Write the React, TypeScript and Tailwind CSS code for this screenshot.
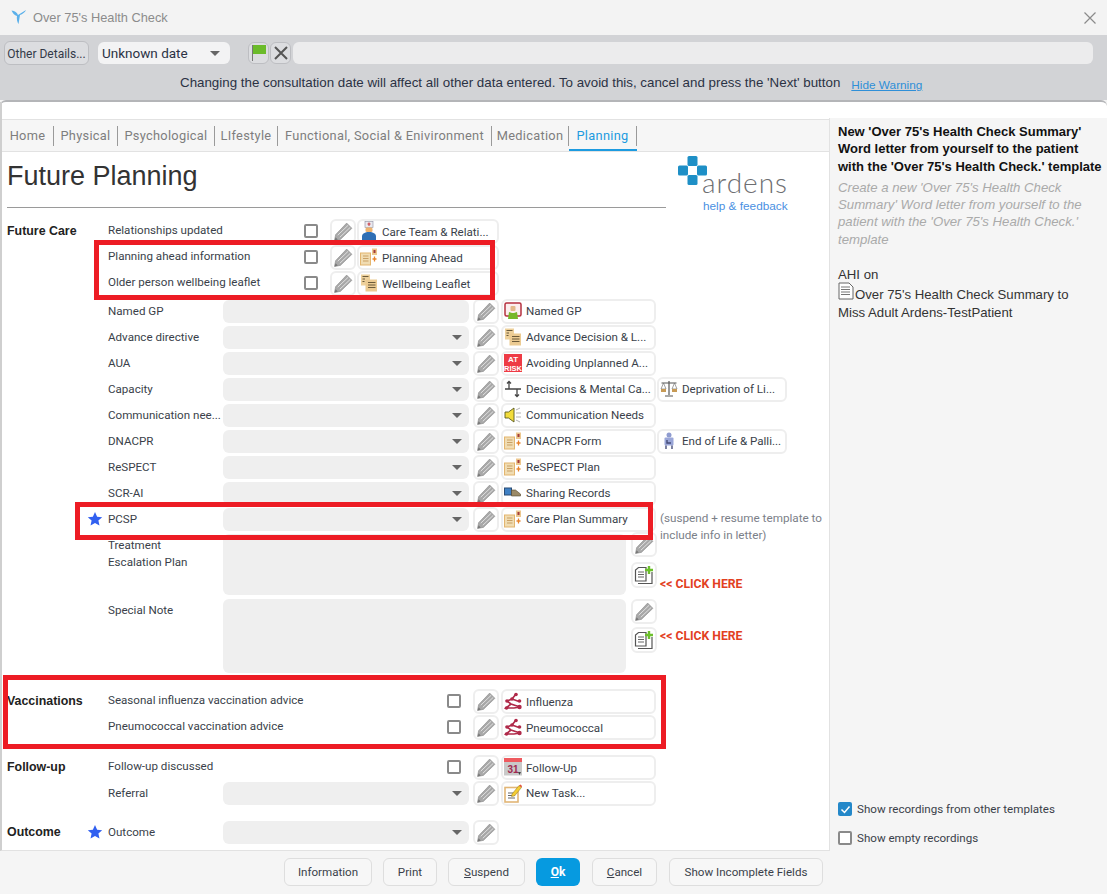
import type { ReactNode } from "react";

const Pencil = () => (
  <svg width="21" height="21" viewBox="0 0 20 20" aria-hidden="true">
    <path d="M1.500 18.500l1-5.500L13 2l5 5L7 17.500z" fill="#a8a8a8" stroke="#959595" strokeWidth="0.700" />
    <path d="M4.500 13.500L14.500 4M6.500 15.500L16.500 6" stroke="#e4e4e4" strokeWidth="0.900" />
    <path d="M1.500 18.500l1-3 2 2z" fill="#777" />
  </svg>
);

const Leaflet = () => (
  <svg width="18" height="18" viewBox="0 0 18 18" aria-hidden="true">
    <rect x="1" y="0.500" width="9" height="11" fill="#eed19c" />
    <rect x="5.500" y="5.500" width="11.500" height="12" fill="#eccb92" />
    <path d="M2.500 2.500h6M2.500 5h2.500M2.500 7.500h2M8 8.500h7.500M8 11h7.500M8 13.500h7.500" stroke="#6b5a3a" strokeWidth="1" />
  </svg>
);

const PlanDoc = () => (
  <svg width="18" height="18" viewBox="0 0 18 18" aria-hidden="true">
    <rect x="0.500" y="5" width="10" height="12" fill="#f0dcb2" stroke="#e3b56e" />
    <path d="M3 8h5.500M3 10.500h5.500M3 13h5.500" stroke="#c9a064" strokeWidth="1" />
    <rect x="12" y="0.500" width="5" height="6.500" fill="#edc88f" />
    <rect x="13.500" y="2" width="2" height="3" fill="#a33b3b" />
    <path d="M14.500 8.500v5M12.500 11h4" stroke="#e8832b" strokeWidth="1.300" />
  </svg>
);

const CareTeam = () => (
  <svg width="18" height="20" viewBox="0 0 18 20" aria-hidden="true">
    <rect x="5" y="0.500" width="8" height="6" fill="#e9e9ee" stroke="#8d8da0" strokeWidth="0.600" />
    <path d="M9 1.500v3.500M7.500 3h3" stroke="#c8323c" strokeWidth="1" />
    <rect x="5.500" y="6.500" width="7" height="4.500" rx="1.500" fill="#eeb36e" />
    <path d="M2 19v-3.500c0-3 3-4.500 7-4.500s7 1.500 7 4.500V19z" fill="#2f6fb5" />
  </svg>
);

const NamedGp = () => (
  <svg width="18" height="18" viewBox="0 0 18 18" aria-hidden="true">
    <rect x="1" y="1" width="16" height="13" rx="1.500" fill="#fbeeee" stroke="#b5303f" strokeWidth="1.500" />
    <rect x="6.500" y="4" width="5" height="5" rx="1" fill="#e3b98a" />
    <path d="M4 17l1-7 3 1h2l3-1 1 7z" fill="#76b82a" />
  </svg>
);

const AtRisk = () => (
  <svg width="18" height="18" viewBox="0 0 18 18" aria-hidden="true">
    <rect width="18" height="18" fill="#ee3b45" />
    <text x="9" y="8" textAnchor="middle" fontSize="8" fontWeight="700" fontFamily="Liberation Sans" fill="#fff">AT</text>
    <text x="9" y="16.500" textAnchor="middle" fontSize="7.500" fontWeight="700" fontFamily="Liberation Sans" fill="#fff">RISK</text>
  </svg>
);

const Decisions = () => (
  <svg width="18" height="18" viewBox="0 0 18 18" fill="none" stroke="#444" strokeWidth="1.300" aria-hidden="true">
    <path d="M5 1.500v8M3 3.500l2-2 2 2M1 9h16M13 9v7.500M11 14.500l2 2 2-2" />
  </svg>
);

const Speaker = () => (
  <svg width="18" height="18" viewBox="0 0 18 18" aria-hidden="true">
    <path d="M1 6h3.500L10 2v14l-5.500-4H1z" fill="#f2dc3b" stroke="#5a5a20" strokeWidth="0.900" />
    <path d="M12 4l4-2M12 7h5M12 11h5M12 14l4 2" stroke="#aaa" strokeWidth="0.900" />
  </svg>
);

const Sharing = () => (
  <svg width="18" height="18" viewBox="0 0 18 18" aria-hidden="true">
    <rect x="0.500" y="4" width="7" height="7" fill="#3f80c4" stroke="#2b4c74" />
    <path d="M7.500 6h4l5 4v2h-9z" fill="#9b8a67" stroke="#55492f" strokeWidth="0.600" />
  </svg>
);

const Scales = () => (
  <svg width="18" height="18" viewBox="0 0 18 18" aria-hidden="true">
    <path d="M9 1v14M1.500 3h15M5 16h8" stroke="#555" strokeWidth="1.200" fill="none" />
    <path d="M3.500 3L1 9h5zM14.500 3L12 9h5z" fill="none" stroke="#777" strokeWidth="0.700" />
    <rect x="1" y="9" width="5" height="3" fill="#c79a55" />
    <rect x="12" y="9" width="5" height="3" fill="#c79a55" />
  </svg>
);

const Palliative = () => (
  <svg width="18" height="18" viewBox="0 0 18 18" aria-hidden="true">
    <circle cx="9" cy="3" r="2.500" fill="#8f9cd0" />
    <rect x="4.500" y="5.500" width="9" height="8" rx="1" fill="#9aa6d8" />
    <path d="M7 8v3h4M6 13.500V17M12 13.500V17" stroke="#454c78" strokeWidth="1.400" fill="none" />
  </svg>
);

const Network = () => (
  <svg width="18" height="18" viewBox="0 0 18 18" aria-hidden="true">
    <path d="M12 2L8 7 3 9l4 3 9 3M8 7l7 2.500M7 12l-5 4h8l6-1" stroke="#b02a4a" strokeWidth="1.700" fill="none" />
    <circle cx="12" cy="2.500" r="1.800" fill="#b02a4a" />
    <circle cx="8" cy="7" r="1.800" fill="#b02a4a" />
    <circle cx="15.500" cy="9" r="1.800" fill="#b02a4a" />
    <circle cx="3" cy="9" r="1.800" fill="#b02a4a" />
    <circle cx="15.500" cy="15" r="2.200" fill="#b02a4a" />
    <circle cx="2.500" cy="16" r="1.800" fill="#b02a4a" />
  </svg>
);

const Calendar = () => (
  <svg width="18" height="18" viewBox="0 0 18 18" aria-hidden="true">
    <rect width="18" height="4" fill="#ee5a5f" />
    <rect y="4" width="18" height="13.500" fill="#c9c9c9" />
    <text x="3.500" y="14.500" fontSize="10" fontFamily="Liberation Sans" fontWeight="700" fill="#a02a50">31</text>
    <path d="M14 14h3l-1.500 3z" fill="#444" />
  </svg>
);

const NewTask = () => (
  <svg width="18" height="19" viewBox="0 0 18 19" aria-hidden="true">
    <rect x="1" y="3.500" width="13" height="14.500" fill="#fff" stroke="#e2b676" strokeWidth="1.600" />
    <path d="M4 9h7M4 11.500h7M4 14h7" stroke="#555" strokeWidth="0.900" />
    <path d="M8 10l7-8.500 2.500 2L10.500 12 7.500 12.500z" fill="#f4cc32" stroke="#8a7420" strokeWidth="0.500" />
    <path d="M15 1.500l2.500 2 .5-1.500-1.500-1.500z" fill="#e2533a" />
  </svg>
);

const AddDoc = () => (
  <svg width="20" height="20" viewBox="0 0 20 20" aria-hidden="true">
    <path d="M4 18.500h14V7" fill="none" stroke="#555" strokeWidth="1.200" />
    <path d="M1.500 16V5l3-2.500H12V16z" fill="#fff" stroke="#555" strokeWidth="1.200" />
    <path d="M4 7h6M4 9.500h6M4 12h6" stroke="#555" strokeWidth="0.900" />
    <path d="M15 1v8M11 5h8" stroke="#6cc02c" strokeWidth="2.400" />
  </svg>
);

const Star = () => (
  <svg width="16" height="16" viewBox="0 0 24 24" aria-hidden="true">
    <path d="M12 1.500l3.200 7 7.600.8-5.700 5.100 1.600 7.500L12 18l-6.700 3.900 1.600-7.500L1.200 9.300l7.600-.8z" fill="#3160f0" />
  </svg>
);

const Arrow = () => <span className="h-0 w-0 border-x-[5px] border-t-[5px] border-x-transparent border-t-[#666]" />;

const Box = () => <span className="block h-[14px] w-[14px] shrink-0 rounded-[2px] border-2 border-[#8a8a8a] bg-white" />;

const EditButton = () => (
  <button className="flex h-[25px] w-[26px] shrink-0 items-center justify-center rounded-md border-2 border-[#eeeeee] bg-white">
    <Pencil />
  </button>
);

function LinkButton({ icon, label, className, textTop = "pt-[1px]" }: { icon: ReactNode; label: string; className: string; textTop?: string }) {
  return (
    <button className={`flex h-[25px] shrink-0 items-center gap-[4px] overflow-hidden rounded-md border-2 border-[#eeeeee] bg-white pl-[1px] text-left text-[11.6px] whitespace-nowrap text-[#3a3f4a] ${className}`}>
      <span className="flex w-[18px] shrink-0 justify-center">{icon}</span>
      <span className={textTop}>{label}</span>
    </button>
  );
}

function Lead({ section, star }: { section?: string; star?: boolean }) {
  return (
    <>
      <div className="w-[79px] shrink-0 pl-[5px] font-['Liberation_Sans',sans-serif] text-[12.4px] font-bold text-[#222]">{section}</div>
      <div className="flex w-[27px] shrink-0 justify-center">{star && <Star />}</div>
    </>
  );
}

function CheckRow({ section, label, icon, link }: { section?: string; label: string; icon: ReactNode; link: string }) {
  return (
    <div className="flex h-[26px] items-center">
      <Lead section={section} />
      <div className="w-[196px] shrink-0 pb-[1px] text-[11.6px] text-[#3a3f4a]">{label}</div>
      <Box />
      <div className="ml-3 flex gap-px">
        <EditButton />
        <LinkButton icon={icon} label={link} className="w-[142px]" textTop="pt-[3px]" />
      </div>
    </div>
  );
}

function WideCheckRow({ section, label, icon, link }: { section?: string; label: string; icon: ReactNode; link: string }) {
  return (
    <div className="flex h-[26px] items-center">
      <Lead section={section} />
      <div className="w-[339px] shrink-0 pb-[1px] text-[11.6px] text-[#3a3f4a]">{label}</div>
      <Box />
      <div className="ml-3 flex gap-[2px]">
        <EditButton />
        <LinkButton icon={icon} label={link} className="w-[155px]" textTop="pt-[3px]" />
      </div>
    </div>
  );
}

type SelectRowProps = {
  section?: string;
  star?: boolean;
  label: string;
  noArrow?: boolean;
  icon?: ReactNode;
  link?: string;
  icon2?: ReactNode;
  link2?: string;
  children?: ReactNode;
};

function SelectRow({ section, star, label, noArrow, icon, link, icon2, link2, children }: SelectRowProps) {
  return (
    <div className="flex h-[26px] items-center">
      <Lead section={section} star={star} />
      <div className="w-[115px] shrink-0 pt-[2px] text-[11.6px] whitespace-nowrap text-[#3a3f4a]">{label}</div>
      <div className="flex h-[23px] w-[246px] shrink-0 items-center justify-end rounded-md bg-[#efefef] pr-[7px]">{!noArrow && <Arrow />}</div>
      <div className="ml-1 flex gap-[2px]">
        <EditButton />
        {link && <LinkButton icon={icon} label={link} className="w-[155px]" />}
      </div>
      {link2 && <LinkButton icon={icon2} label={link2} className="ml-px w-[130px]" />}
      {children}
    </div>
  );
}

type NoteRowProps = { labels: string[]; area: string; labelTop: string; addTop: string; clickTop: string };

function NoteRow({ labels, area, labelTop, addTop, clickTop }: NoteRowProps) {
  return (
    <div className="flex items-start">
      <Lead />
      <div className={`w-[115px] shrink-0 text-[11.6px] leading-[17px] text-[#3a3f4a] ${labelTop}`}>
        {labels.map((l) => (
          <div key={l}>{l}</div>
        ))}
      </div>
      <div className={`w-[403px] shrink-0 rounded-md bg-[#efefef] ${area}`} />
      <div className="ml-[5px] flex flex-col">
        <EditButton />
        <div className={`flex items-start gap-[3px] ${addTop}`}>
          <button className="flex h-[26px] w-[26px] shrink-0 items-center justify-center rounded-md border-2 border-[#eeeeee] bg-white">
            <AddDoc />
          </button>
          <span className={`text-[12.2px] font-bold whitespace-nowrap text-[#e2401f] ${clickTop}`}>&lt;&lt; CLICK HERE</span>
        </div>
      </div>
    </div>
  );
}

function FooterButton({ children, className }: { children: ReactNode; className: string }) {
  return (
    <button className={`flex h-[28px] items-center justify-center rounded-md border border-[#dedede] bg-[#f7f7f7] pt-px text-[11.6px] text-[#3a3f4a] ${className}`}>
      {children}
    </button>
  );
}

const tabs = [
  { label: "Home", width: "w-[51px]" },
  { label: "Physical", width: "w-[63px]" },
  { label: "Psychological", width: "w-[96px]" },
  { label: "LIfestyle", width: "w-[62px]" },
  { label: "Functional, Social & Enivironment", width: "w-[213px]" },
  { label: "Medication", width: "w-[76px]" },
];

export default function App() {
  return (
    <div className="relative flex h-[894px] w-[1107px] flex-col overflow-hidden bg-[#f3f3f3] font-['Roboto',sans-serif]">
      <header className="flex h-[35px] shrink-0 items-center pl-[11px] pr-[10px]">
        <svg width="16" height="18" viewBox="0 0 16 18" aria-hidden="true">
          <path d="M0.500 1.500C4 2 6 3.500 7 6l8-5c-1 2.500-3.500 4-6 5l-1.500 9c-1.500-2-2-6-1.500-8C3.500 6.500 1.500 4 .5 1.500z" fill="#5ab0ea" />
        </svg>
        <span className="ml-[6px] font-['Liberation_Sans',sans-serif] text-[12.8px] text-[#8c8c8c]">Over 75's Health Check</span>
        <svg className="ml-auto" width="14" height="14" viewBox="0 0 14 14" aria-hidden="true">
          <path d="M1.500 1.500l11 11M12.500 1.500l-11 11" stroke="#8a8a8a" strokeWidth="1.200" />
        </svg>
      </header>

      <section className="h-[65px] shrink-0 bg-[#d2d3d6]">
        <div className="flex items-center pt-[6px] pl-[4px]">
          <button className="h-[24px] w-[85px] rounded-md border border-[#bdbec2] bg-[#dcdde0] pt-px text-[12px] whitespace-nowrap text-[#333a48]">Other Details...</button>
          <div className="ml-[9px] flex h-[22px] w-[132px] items-center justify-between rounded-md bg-[#f3f3f4] pr-[10px] pl-[4px] text-[13.5px] text-[#2b3244]">
            Unknown date
            <Arrow />
          </div>
          <button className="ml-[18px] flex h-[22px] w-[21px] items-center justify-center rounded-md border border-[#bdbec2] bg-[#dcdde0]">
            <svg width="16" height="18" viewBox="0 0 16 18" aria-hidden="true">
              <path d="M1.500 1v16" stroke="#777" strokeWidth="1" />
              <rect x="2" y="1" width="13" height="9" fill="#6bbb2a" />
            </svg>
          </button>
          <button className="ml-px flex h-[22px] w-[21px] items-center justify-center rounded-md border border-[#bdbec2] bg-[#dcdde0]">
            <svg width="14" height="14" viewBox="0 0 14 14" aria-hidden="true">
              <path d="M1 1l12 12M13 1L1 13" stroke="#555" strokeWidth="2" />
            </svg>
          </button>
          <div className="ml-[2px] h-[22px] w-[800px] rounded-md bg-[#ececed]" />
        </div>
        <div className="mt-[7px] flex items-center pl-[180px] font-['Liberation_Sans',sans-serif] text-[13.33px] text-[#2b3244]">
          <span>Changing the consultation date will affect all other data entered. To avoid this, cancel and press the 'Next' button</span>
          <span className="ml-[11px] pt-[5px] text-[11.8px] text-[#2e8fd8] underline">Hide Warning</span>
        </div>
      </section>

      <main className="flex min-h-0 flex-1 flex-col rounded-t-md border-t-2 border-[#b4b5b8] bg-white">
        <div className="flex min-h-0 flex-1">
          <div className="flex w-[829px] shrink-0 flex-col border-b border-l-2 border-b-[#e2e2e2] border-l-[#cfcfcf]">
            <nav className="mt-[17px] flex h-[33px] shrink-0 items-stretch border-y border-[#e2e2e2] bg-[#f6f6f6] text-[12.8px] tracking-[0.3px] text-[#7e7e7e]">
              {tabs.map((t) => (
                <div key={t.label} className="flex items-center">
                  <span className={`whitespace-nowrap text-center ${t.width}`}>{t.label}</span>
                  <span className="h-[20px] w-px bg-[#9a9a9a]" />
                </div>
              ))}
              <div className="flex items-center border-b-2 border-[#1d9be0] pt-[2px] text-[#1d9be0]">
                <span className="w-[67px] text-center">Planning</span>
                <span className="h-[20px] w-px bg-[#9a9a9a]" />
              </div>
            </nav>

            <div className="relative flex h-[56px] shrink-0 items-start">
              <h1 className="mt-[8px] ml-[5px] font-['Liberation_Sans',sans-serif] text-[27px] leading-[32px] text-[#333]">Future Planning</h1>
              <div className="absolute top-[55px] left-[5px] h-px w-[659px] bg-[#9a9a9a]" />
              <div className="absolute top-[3px] left-[675px] w-[115px]">
                <svg width="32" height="32" viewBox="0 0 32 32" aria-hidden="true">
                  <g fill="#1e8fc6">
                    <rect x="10.500" y="1" width="10" height="10" rx="1.500" />
                    <rect x="1" y="10.500" width="10" height="10" rx="1.500" />
                    <rect x="20" y="10.500" width="10" height="10" rx="1.500" />
                    <rect x="10.500" y="20" width="10" height="10" rx="1.500" />
                  </g>
                </svg>
                <div className="absolute top-[11px] left-[25px] font-['Lato',sans-serif] text-[28px] leading-[32px] font-light tracking-[1px] text-[#6d6e71]">ardens</div>
                <div className="absolute top-[43px] left-[26px] font-['Liberation_Sans',sans-serif] text-[11.8px] whitespace-nowrap text-[#4a90e2]">help &amp; feedback</div>
              </div>
            </div>

            <div className="flex flex-col pt-[10px]">
              <CheckRow section="Future Care" label="Relationships updated" icon={<CareTeam />} link="Care Team & Relati..." />
              <CheckRow label="Planning ahead information" icon={<PlanDoc />} link="Planning Ahead" />
              <CheckRow label="Older person wellbeing leaflet" icon={<Leaflet />} link="Wellbeing Leaflet" />
              <div className="h-[2px]" />
              <SelectRow label="Named GP" noArrow icon={<NamedGp />} link="Named GP" />
              <SelectRow label="Advance directive" icon={<Leaflet />} link="Advance Decision & L..." />
              <SelectRow label="AUA" icon={<AtRisk />} link="Avoiding Unplanned A..." />
              <SelectRow label="Capacity" icon={<Decisions />} link="Decisions & Mental Ca..." icon2={<Scales />} link2="Deprivation of Li..." />
              <SelectRow label="Communication nee..." icon={<Speaker />} link="Communication Needs" />
              <SelectRow label="DNACPR" icon={<PlanDoc />} link="DNACPR Form" icon2={<Palliative />} link2="End of Life & Palli..." />
              <SelectRow label="ReSPECT" icon={<PlanDoc />} link="ReSPECT Plan" />
              <SelectRow label="SCR-AI" icon={<Sharing />} link="Sharing Records" />
              <SelectRow star label="PCSP" icon={<PlanDoc />} link="Care Plan Summary">
                <p className="ml-1 w-[166px] shrink-0 self-start pt-[4px] text-[11.7px] leading-[17px] text-[#7b8088]">(suspend + resume template to include info in letter)</p>
              </SelectRow>
              <NoteRow labels={["Treatment", "Escalation Plan"]} area="mt-[2px] h-[61px]" labelTop="pt-[5px]" addTop="mt-[5px]" clickTop="pt-[13px]" />
              <div className="mt-[4px]">
                <NoteRow labels={["Special Note"]} area="h-[74px]" labelTop="pt-[3px]" addTop="mt-[3px]" clickTop="pt-0" />
              </div>
              <div className="mt-[15px]">
                <WideCheckRow section="Vaccinations" label="Seasonal influenza vaccination advice" icon={<Network />} link="Influenza" />
                <WideCheckRow label="Pneumococcal vaccination advice" icon={<Network />} link="Pneumococcal" />
              </div>
              <div className="mt-[14px]">
                <WideCheckRow section="Follow-up" label="Follow-up discussed" icon={<Calendar />} link="Follow-Up" />
                <SelectRow label="Referral" icon={<NewTask />} link="New Task..." />
              </div>
              <div className="mt-[13px]">
                <SelectRow section="Outcome" star label="Outcome" />
              </div>
            </div>
          </div>

          <aside className="mt-[16px] flex min-h-0 flex-1 flex-col border-l border-[#e2e2e2] bg-[#f5f5f5] pt-[5px] pl-[8px] font-['Liberation_Sans',sans-serif] text-[13.2px] leading-[17.3px]">
            <p className="text-[13px] font-bold text-[#111]">New 'Over 75's Health Check Summary' Word letter from yourself to the patient with the 'Over 75's Health Check.' template</p>
            <p className="mt-[4px] pr-[12px] text-[#aaaaaa] italic">Create a new 'Over 75's Health Check Summary' Word letter from yourself to the patient with the 'Over 75's Health Check.' template</p>
            <p className="mt-[18px] text-[#333]">AHI on</p>
            <p className="-mt-[1px] pr-[20px] text-[#333]">
              <svg className="mr-px inline-block align-[-1px]" width="16" height="18" viewBox="0 0 16 18" aria-hidden="true">
                <path d="M1 1h10l4 4v12H1z" fill="#fff" stroke="#666" />
                <path d="M3 5h9M3 7.500h9M3 10h9M3 12.500h9" stroke="#777" />
              </svg>
              Over 75's Health Check Summary to Miss Adult Ardens-TestPatient
            </p>
            <div className="mt-auto flex flex-col gap-[15px] pb-[6px] font-['Roboto',sans-serif] text-[11.6px] leading-[14px] text-[#3a3f4a]">
              <label className="flex items-center gap-[5px]">
                <span className="flex h-[14px] w-[14px] items-center justify-center rounded-[2px] bg-[#2488c9]">
                  <svg width="11" height="11" viewBox="0 0 11 11" aria-hidden="true">
                    <path d="M1.500 5.500l3 3 5-6" fill="none" stroke="#fff" strokeWidth="1.500" />
                  </svg>
                </span>
                Show recordings from other templates
              </label>
              <label className="flex items-center gap-[5px]">
                <Box />
                Show empty recordings
              </label>
            </div>
          </aside>
        </div>

        <footer className="flex h-[43px] shrink-0 items-center bg-[#f5f5f5] pb-[1px] pl-[284px]">
          <FooterButton className="w-[88px]">Information</FooterButton>
          <FooterButton className="ml-[11px] w-[54px]">Print</FooterButton>
          <FooterButton className="ml-[11px] w-[77px]">
            <u>S</u>uspend
          </FooterButton>
          <button className="ml-[11px] h-[28px] w-[44px] rounded-md bg-[#069ae0] text-[12px] font-bold text-white">
            <u>O</u>k
          </button>
          <FooterButton className="ml-[12px] w-[65px]">
            <u>C</u>ancel
          </FooterButton>
          <FooterButton className="ml-[12px] w-[154px]">Show Incomplete Fields</FooterButton>
        </footer>
      </main>

      <div className="pointer-events-none absolute top-[240px] left-[94px] h-[60px] w-[401px] border-[5px] border-[#ed1c24]" />
      <div className="pointer-events-none absolute top-[502px] left-[75px] h-[38px] w-[578px] border-[5px] border-[#ed1c24]" />
      <div className="pointer-events-none absolute top-[675px] left-[3px] h-[74px] w-[663px] border-[5px] border-[#ed1c24]" />
    </div>
  );
}
